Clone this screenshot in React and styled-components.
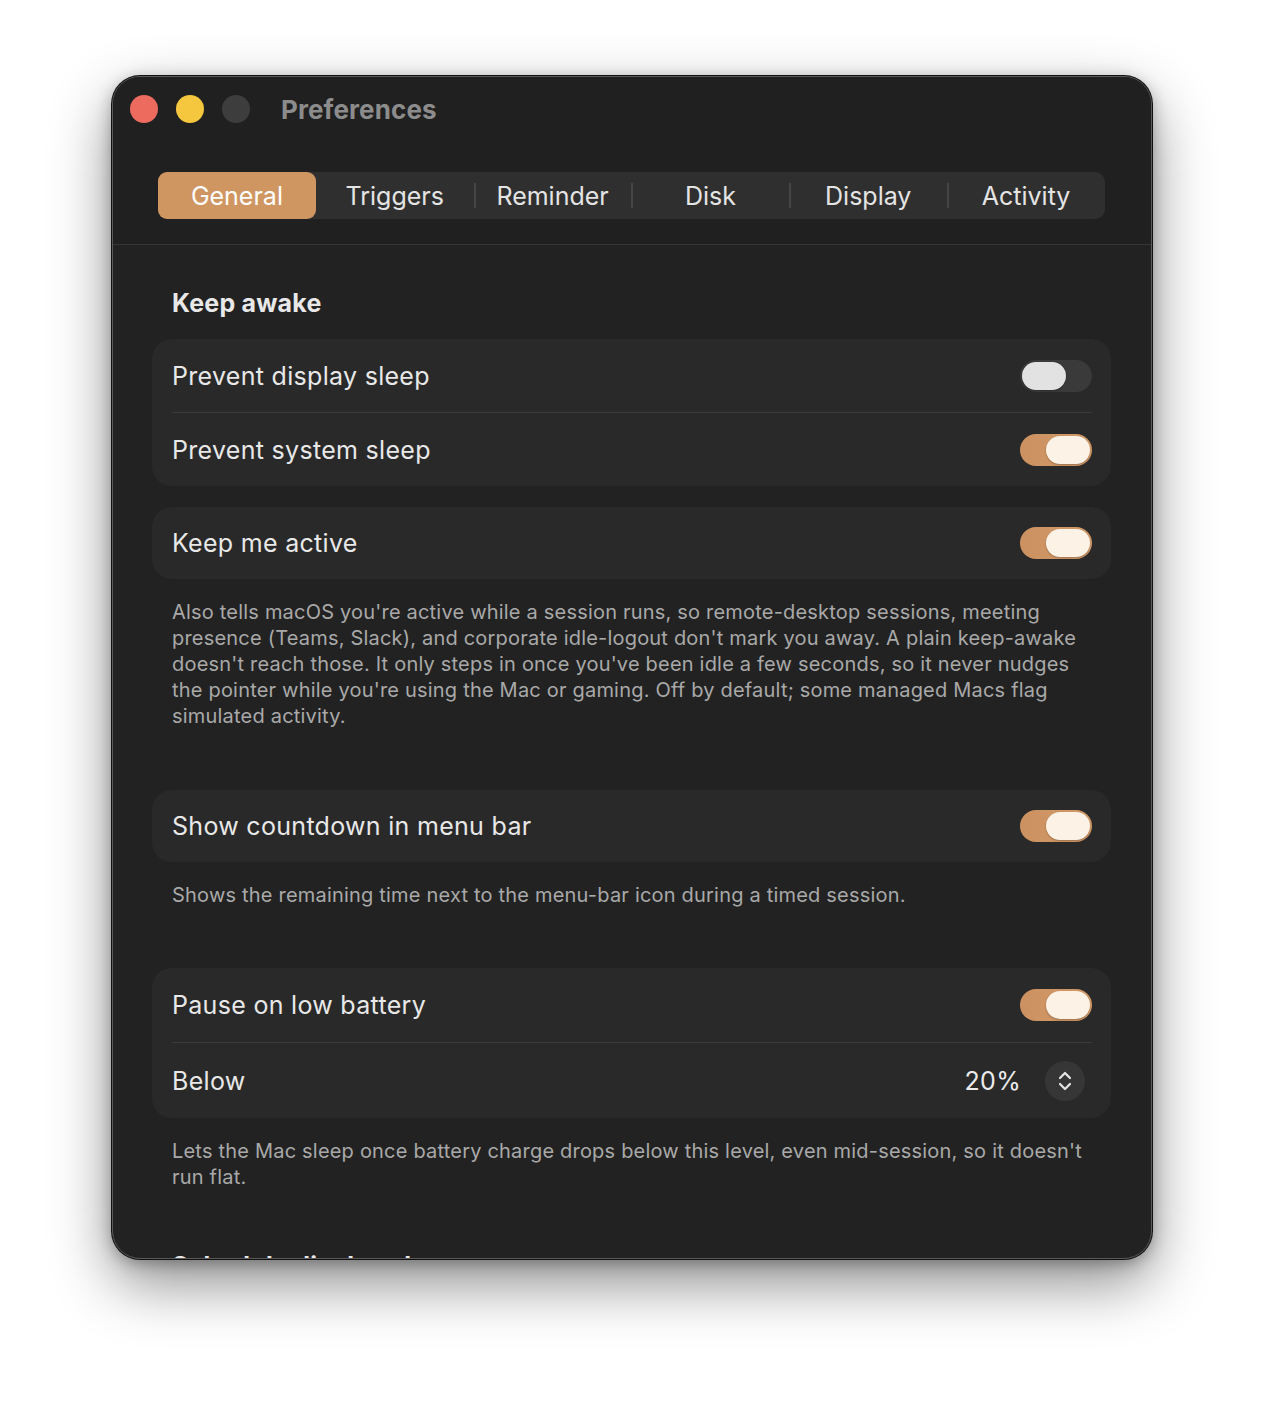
import React, {useState} from "react";
import styled, {createGlobalStyle} from "styled-components";

const GlobalStyle = createGlobalStyle`
body {
  margin: 0;
  background: #ffffff;
  font-family: Inter, "Noto Sans", "Liberation Sans", sans-serif;
  -webkit-font-smoothing: antialiased;
}
`;

const Page = styled.div`
width: 1264px;
height: 1408px;
padding: 76px 112px;
box-sizing: border-box;
`;

const Window = styled.div`
width: 1040px;
height: 1183px;
box-sizing: border-box;
background: #222222;
border-radius: 28px;
border: 1px solid #5a5a5a;
box-shadow: 0 0 0 1px #111, 0 24px 60px rgba(0,0,0,0.45), 0 4px 16px rgba(0,0,0,0.3);
overflow: hidden;
display: flex;
flex-direction: column;
`;

const Header = styled.div`
background: #202020;
border-bottom: 1px solid #363636;
padding: 17px 0 25px;
display: flex;
flex-direction: column;
`;

const TitleRow = styled.div`
display: flex;
align-items: center;
gap: 18px;
padding-left: 17px;
height: 30px;
`;

const Light = styled.span`
width: 28px;
height: 28px;
border-radius: 50%;
background: ${p => p.$color};
`;

const Title = styled.div`
margin-left: 13px;
font-size: 26px;
font-weight: 700;
color: #8c8c8c;
letter-spacing: 0.1px;
`;

const Tabs = styled.div`
margin: 48px 46px 0 45px;
height: 47px;
background: #2f2f2f;
border-radius: 10px;
display: grid;
grid-template-columns: repeat(6, 1fr);
`;

const Tab = styled.div`
position: relative;
display: flex;
align-items: center;
justify-content: center;
font-size: 25px;
color: ${p => (p.$active ? "#ffffff" : "#e4e4e4")};
background: ${p => (p.$active ? "#cf9662" : "transparent")};
border-radius: 9px;
&::before {
  content: "";
  display: ${p => (p.$sep ? "block" : "none")};
  position: absolute;
  left: 0;
  top: 11px;
  bottom: 11px;
  width: 2px;
  background: #454545;
}
`;

const Content = styled.div`
flex: 1;
padding: 41px 40px 0 39px;
display: flex;
flex-direction: column;
`;

const SectionTitle = styled.div`
padding-left: 20px;
font-size: 25px;
font-weight: 700;
color: #e8e8e8;
letter-spacing: 0.2px;
line-height: 34px;
margin: ${p => p.$top || "0"} 0 19px;
`;

const Card = styled.div`
background: #292929;
border-radius: 20px;
padding: 0 19px 0 20px;
margin-bottom: ${p => p.$gap || "0"};
`;

const Row = styled.div`
height: ${p => p.$h || "73px"};
display: flex;
align-items: center;
justify-content: space-between;
& + & {
  border-top: 1px solid #3a3a3a;
}
`;

const Label = styled.span`
font-size: 25px;
letter-spacing: 0.3px;
color: #e8e8e8;
`;

const Note = styled.p`
margin: 20px 0 0;
padding: 0 20px;
max-width: 912px;
font-size: 20px;
letter-spacing: 0.2px;
line-height: 26px;
color: #a9a9a9;
margin-bottom: ${p => p.$gap || "0"};
`;

const Track = styled.button`
width: 72px;
height: 32px;
border: none;
padding: 2px;
border-radius: 16px;
display: flex;
justify-content: ${p => (p.$on ? "flex-end" : "flex-start")};
background: ${p => (p.$on ? "linear-gradient(90deg, #cc9160, #d39a68)" : "#3a3a3a")};
cursor: pointer;
`;

const Knob = styled.span`
width: 44px;
height: 28px;
border-radius: 14px;
background: ${p => (p.$on ? "#fcf2e6" : "#e2e2e2")};
box-shadow: 0 1px 2px rgba(0,0,0,0.25);
`;

const StepperGroup = styled.div`
display: flex;
align-items: center;
gap: 24px;
margin-right: 7px;
`;

const Value = styled.span`
font-size: 25px;
letter-spacing: 0.3px;
color: #ececec;
`;

const StepBtn = styled.div`
width: 40px;
height: 40px;
border-radius: 50%;
background: #363636;
display: flex;
align-items: center;
justify-content: center;
`;

function Toggle({initial}) {
  const [on, setOn] = useState(initial);
  return (
    <Track $on={on} onClick={() => setOn(!on)}>
      <Knob $on={on}/>
    </Track>
  );
}

function Stepper({value}) {
  return (
    <StepperGroup>
      <Value>{value}</Value>
      <StepBtn>
        <svg width="16" height="24" viewBox="0 0 16 24" fill="none" stroke="#e6e6e6" strokeWidth="2.2" strokeLinecap="round" strokeLinejoin="round">
          <path d="M3 9 L8 4 L13 9"/>
          <path d="M3 15 L8 20 L13 15"/>
        </svg>
      </StepBtn>
    </StepperGroup>
  );
}

const tabs = ["General", "Triggers", "Reminder", "Disk", "Display", "Activity"];

export default function App() {
  const active = 0;
  return (
    <Page>
      <GlobalStyle/>
      <Window>
        <Header>
          <TitleRow>
            <Light $color="#ec6a5e"/>
            <Light $color="#f4c73f"/>
            <Light $color="#3d3d3d"/>
            <Title>Preferences</Title>
          </TitleRow>
          <Tabs>
            {tabs.map((t, i) => (
              <Tab key={t} $active={i === active} $sep={i > 0 && i !== active && i - 1 !== active}>{t}</Tab>
            ))}
          </Tabs>
        </Header>
        <Content>
          <SectionTitle>Keep awake</SectionTitle>
          <Card $gap="21px">
            <Row>
              <Label>Prevent display sleep</Label>
              <Toggle initial={false}/>
            </Row>
            <Row>
              <Label>Prevent system sleep</Label>
              <Toggle initial={true}/>
            </Row>
          </Card>
          <Card>
            <Row $h="72px">
              <Label>Keep me active</Label>
              <Toggle initial={true}/>
            </Row>
          </Card>
          <Note $gap="61px">
            Also tells macOS you're active while a session runs, so remote-desktop sessions, meeting
            presence (Teams, Slack), and corporate idle-logout don't mark you away. A plain keep-awake
            doesn't reach those. It only steps in once you've been idle a few seconds, so it never nudges
            the pointer while you're using the Mac or gaming. Off by default; some managed Macs flag
            simulated activity.
          </Note>
          <Card>
            <Row $h="72px">
              <Label>Show countdown in menu bar</Label>
              <Toggle initial={true}/>
            </Row>
          </Card>
          <Note $gap="60px">
            Shows the remaining time next to the menu-bar icon during a timed session.
          </Note>
          <Card>
            <Row $h="74px">
              <Label>Pause on low battery</Label>
              <Toggle initial={true}/>
            </Row>
            <Row $h="75px">
              <Label>Below</Label>
              <Stepper value="20%"/>
            </Row>
          </Card>
          <Note>
            Lets the Mac sleep once battery charge drops below this level, even mid-session, so it doesn't
            run flat.
          </Note>
          <SectionTitle $top="59px">Schedule display sleep</SectionTitle>
        </Content>
      </Window>
    </Page>
  );
}
